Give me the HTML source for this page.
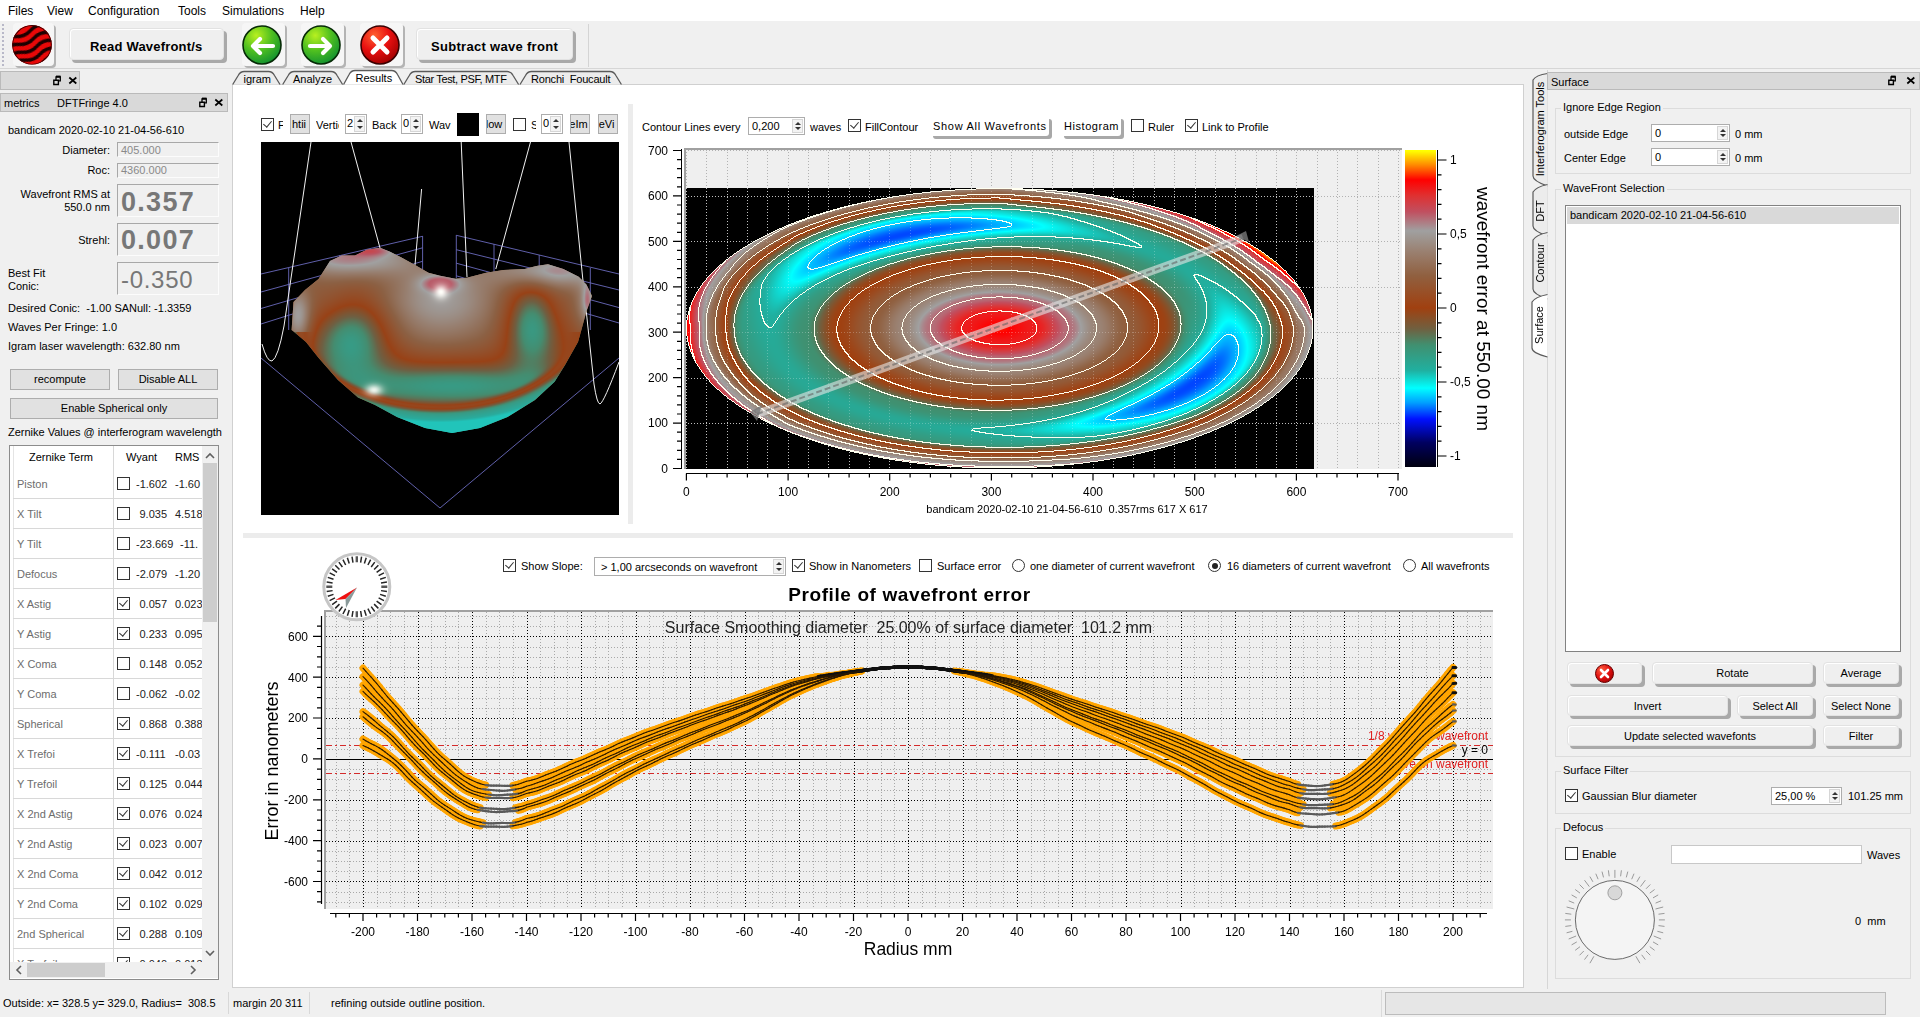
<!DOCTYPE html>
<html><head><meta charset="utf-8">
<style>
*{box-sizing:border-box}
html,body{margin:0;padding:0}
body{width:1920px;height:1017px;overflow:hidden;background:#f0f0f0;position:relative;font-family:"Liberation Sans",sans-serif;font-size:11px;color:#000}
.a{position:absolute}
.t{position:absolute;white-space:nowrap;line-height:1}
.menu{left:0;top:0;width:1920px;height:21px;background:#fff}
.menu span{position:absolute;top:4px;font-size:12px}
.tbtn{position:absolute;background:#efefef;border-radius:4px;box-shadow:inset 1px 1px 0 #fff, 3px 3px 0 #a9a9a9;border:1px solid #e2e2e2}
.btxt{font-weight:bold;font-size:13px;position:absolute;white-space:nowrap;line-height:1}
.dtitle{position:absolute;background:#d9d9d9;border:1px solid #bababa}
.pbtn{position:absolute;background:#e1e1e1;border:1px solid #adadad;text-align:center;font-size:11px;line-height:19px}
.fld{position:absolute;background:#f0f0f0;border:1px solid #fcfcfc;border-top-color:#a8a8a8;border-left-color:#a8a8a8}
.cb{position:absolute;width:13px;height:13px;border:1px solid #333;background:#fff}
.cb.on::after{content:"";position:absolute;left:3px;top:0px;width:4px;height:7px;border:solid #333;border-width:0 1.5px 1.5px 0;transform:rotate(40deg)}
.spin{position:absolute;background:#fff;border:1px solid #adadad;overflow:hidden}
.spin span{position:absolute;left:1px;top:3px;line-height:1;white-space:nowrap}
.spin i{position:absolute;right:1px;top:1px;bottom:1px;width:11px;background:#f3f3f3;border:1px solid #d6d6d6}
.spin i::before{content:"";position:absolute;left:2px;top:2px;border:3px solid transparent;border-top:0;border-bottom:3px solid #333}
.spin i::after{content:"";position:absolute;left:2px;bottom:2px;border:3px solid transparent;border-bottom:0;border-top:3px solid #333}
.sbtn{position:absolute;background:#fff;border-radius:3px;box-shadow:3px 3px 0 #a8a8a8}
.rb{position:absolute;width:13px;height:13px;border:1px solid #333;border-radius:50%;background:#fff}
.rb.on::after{content:"";position:absolute;left:2.5px;top:2.5px;width:6px;height:6px;border-radius:50%;background:#222}
.grp{position:absolute;border:1px solid #dcdcdc}
.ibtn{position:absolute;background:#f6f6f6;border-radius:4px;box-shadow:2px 2px 0 #b4b4b4}
</style></head>
<body>
<!-- MENU -->
<div class="a menu">
<span style="left:8px">Files</span>
<span style="left:47px">View</span>
<span style="left:88px">Configuration</span>
<span style="left:178px">Tools</span>
<span style="left:222px">Simulations</span>
<span style="left:300px">Help</span>
</div>
<!-- TOOLBAR -->
<div class="a" style="left:0;top:21px;width:1920px;height:48px;background:#f0f0f0;border-bottom:1px solid #d6d6d6"></div>
<div class="a" style="left:2px;top:24px;width:2px;height:42px;background:repeating-linear-gradient(#b8b8c8 0 2px,transparent 2px 4px)"></div>
<div class="ibtn" style="left:13px;top:23px;width:41px;height:43px"></div>
<div class="ibtn" style="left:242px;top:23px;width:43px;height:43px"></div>
<div class="ibtn" style="left:301px;top:23px;width:43px;height:43px"></div>
<div class="ibtn" style="left:360px;top:23px;width:43px;height:43px"></div>
<div class="tbtn" style="left:69px;top:28px;width:155px;height:32px"></div>
<div class="btxt" style="left:90px;top:40px;letter-spacing:0.2px">Read Wavefront/s</div>
<div class="tbtn" style="left:416px;top:28px;width:157px;height:32px"></div>
<div class="btxt" style="left:431px;top:40px;letter-spacing:0.3px">Subtract wave front</div>
<div class="a" style="left:588px;top:24px;width:1px;height:43px;background:#d4d4d4"></div>
<svg class="a" style="left:0;top:21px" width="420" height="48" viewBox="0 21 420 48">
<defs>
<radialGradient id="gg" cx="0.35" cy="0.25" r="0.8"><stop offset="0" stop-color="#b8f020"/><stop offset="0.5" stop-color="#50c020"/><stop offset="1" stop-color="#109030"/></radialGradient>
<radialGradient id="rg" cx="0.35" cy="0.25" r="0.8"><stop offset="0" stop-color="#ff6030"/><stop offset="0.5" stop-color="#e81010"/><stop offset="1" stop-color="#a00000"/></radialGradient>
<clipPath id="fc"><circle cx="32" cy="44.8" r="19.8"/></clipPath>
<filter id="fb" x="-20%" y="-20%" width="140%" height="140%"><feGaussianBlur stdDeviation="0.7"/></filter>
</defs>
<g clip-path="url(#fc)">
<rect x="10" y="24" width="44" height="44" fill="#e80808"/>
<g transform="rotate(-22 32 45)" stroke="#1a0000" stroke-width="3.6" fill="none" filter="url(#fb)">
<path d="M4 31 Q12 27 20 31 T36 31 T52 31 T68 31"/>
<path d="M4 39.5 Q12 35.5 20 39.5 T36 39.5 T52 39.5 T68 39.5"/>
<path d="M4 48 Q12 44 20 48 T36 48 T52 48 T68 48"/>
<path d="M4 56.5 Q12 52.5 20 56.5 T36 56.5 T52 56.5 T68 56.5"/>
<path d="M4 65 Q12 61 20 65 T36 65 T52 65 T68 65"/>
</g>
<circle cx="32" cy="45" r="19.5" fill="none" stroke="#400000" stroke-width="1.2"/>
</g>

<circle cx="262" cy="45" r="19" fill="url(#gg)" stroke="#062a06" stroke-width="1.6"/>
<path d="M273 46 H254 M260 39 L253 46 L260 53" stroke="#fff" stroke-width="4.2" stroke-linecap="round" stroke-linejoin="round" fill="none"/>
<circle cx="321" cy="45" r="19" fill="url(#gg)" stroke="#062a06" stroke-width="1.6"/>
<path d="M310 46 H329 M323 39 L330 46 L323 53" stroke="#fff" stroke-width="4.2" stroke-linecap="round" stroke-linejoin="round" fill="none"/>
<circle cx="380" cy="45" r="19" fill="url(#rg)" stroke="#3a0000" stroke-width="1.6"/>
<path d="M373 38 L387 52 M387 38 L373 52" stroke="#fff" stroke-width="5" stroke-linecap="round" fill="none"/>
</svg>


<!-- LEFT DOCK -->
<div class="dtitle" style="left:0;top:71px;width:80px;height:19px"></div>
<svg class="a" style="left:50px;top:75px" width="30" height="12" viewBox="0 0 30 12">
<path d="M3.8 5.2h4.6v4.3h-4.6z" fill="none" stroke="#000" stroke-width="1.4"/><path d="M6 5V1.8h4.3v4h-1.8" fill="none" stroke="#000" stroke-width="1.3"/><path d="M6 1.6h4.6" stroke="#000" stroke-width="2"/>
<path d="M19.3 2.5l7 6M26.3 2.5l-7 6" stroke="#000" stroke-width="1.7"/>
</svg>
<div class="dtitle" style="left:0;top:93px;width:228px;height:19px"></div>
<div class="t" style="left:4px;top:98px">metrics</div>
<div class="t" style="left:57px;top:98px">DFTFringe 4.0</div>
<svg class="a" style="left:196px;top:97px" width="30" height="12" viewBox="0 0 30 12">
<path d="M3.8 5.2h4.6v4.3h-4.6z" fill="none" stroke="#000" stroke-width="1.4"/><path d="M6 5V1.8h4.3v4h-1.8" fill="none" stroke="#000" stroke-width="1.3"/><path d="M6 1.6h4.6" stroke="#000" stroke-width="2"/>
<path d="M19.3 2.5l7 6M26.3 2.5l-7 6" stroke="#000" stroke-width="1.7"/>
</svg>
<div class="t" style="left:8px;top:125px">bandicam 2020-02-10 21-04-56-610</div>
<div class="t" style="left:0;top:145px;width:110px;text-align:right">Diameter:</div>
<div class="fld" style="left:117px;top:142px;width:102px;height:15px"></div>
<div class="t" style="left:121px;top:145px;color:#8a8a8a">405.000</div>
<div class="t" style="left:0;top:165px;width:110px;text-align:right">Roc:</div>
<div class="fld" style="left:117px;top:163px;width:102px;height:15px"></div>
<div class="t" style="left:121px;top:165px;color:#8a8a8a">4360.000</div>
<div class="t" style="left:0;top:189px;width:110px;text-align:right">Wavefront RMS at</div>
<div class="t" style="left:0;top:202px;width:110px;text-align:right">550.0 nm</div>
<div class="fld" style="left:117px;top:184px;width:102px;height:33px"></div>
<div class="t" style="left:121px;top:189px;font-size:27px;font-weight:bold;color:#777;letter-spacing:1.3px">0.357</div>
<div class="t" style="left:0;top:235px;width:110px;text-align:right">Strehl:</div>
<div class="fld" style="left:117px;top:223px;width:102px;height:33px"></div>
<div class="t" style="left:121px;top:227px;font-size:27px;font-weight:bold;color:#777;letter-spacing:1.3px">0.007</div>
<div class="t" style="left:8px;top:268px">Best Fit</div>
<div class="t" style="left:8px;top:281px">Conic:</div>
<div class="fld" style="left:117px;top:262px;width:102px;height:33px"></div>
<div class="t" style="left:121px;top:268px;font-size:24px;color:#777;letter-spacing:0.7px">-0.350</div>
<div class="t" style="left:8px;top:303px">Desired Conic:&nbsp; -1.00 SANull: -1.3359</div>
<div class="t" style="left:8px;top:322px">Waves Per Fringe: 1.0</div>
<div class="t" style="left:8px;top:341px">Igram laser wavelength: 632.80 nm</div>
<div class="pbtn" style="left:10px;top:369px;width:100px;height:21px">recompute</div>
<div class="pbtn" style="left:118px;top:369px;width:100px;height:21px">Disable ALL</div>
<div class="pbtn" style="left:10px;top:398px;width:208px;height:21px">Enable Spherical only</div>
<div class="t" style="left:8px;top:427px">Zernike Values @ interferogram wavelength</div>
<div class="a" style="left:9px;top:445px;width:210px;height:535px;background:#fff;border:1px solid #8c8c8c"></div>
<div class="a" style="left:10px;top:446px;width:192px;height:516px;overflow:hidden">
<div class="a" style="left:3px;top:0;width:1px;height:516px;background:#e4e4e4"></div>
<div class="a" style="left:103px;top:0;width:1px;height:516px;background:#d8d8d8"></div>
<div class="t" style="left:19px;top:6px">Zernike Term</div>
<div class="t" style="left:116px;top:6px">Wyant</div>
<div class="t" style="left:165px;top:6px">RMS</div>
<div class="t" style="left:7px;top:33px;color:#6d6d6d">Piston</div>
<div class="cb" style="left:107px;top:31px"></div>
<div class="t" style="left:126px;top:33px;color:#222">-1.602</div>
<div class="t" style="left:165px;top:33px;color:#222">-1.60</div>
<div class="a" style="left:3px;top:52px;width:189px;height:1px;background:#d8d8d8"></div>
<div class="t" style="left:7px;top:63px;color:#6d6d6d">X Tilt</div>
<div class="cb" style="left:107px;top:61px"></div>
<div class="t" style="left:129.5px;top:63px;color:#222">9.035</div>
<div class="t" style="left:165px;top:63px;color:#222">4.518</div>
<div class="a" style="left:3px;top:82px;width:189px;height:1px;background:#d8d8d8"></div>
<div class="t" style="left:7px;top:93px;color:#6d6d6d">Y Tilt</div>
<div class="cb" style="left:107px;top:91px"></div>
<div class="t" style="left:126px;top:93px;color:#222">-23.669</div>
<div class="t" style="left:170px;top:93px;color:#222">-11.</div>
<div class="a" style="left:3px;top:112px;width:189px;height:1px;background:#d8d8d8"></div>
<div class="t" style="left:7px;top:123px;color:#6d6d6d">Defocus</div>
<div class="cb" style="left:107px;top:121px"></div>
<div class="t" style="left:126px;top:123px;color:#222">-2.079</div>
<div class="t" style="left:165px;top:123px;color:#222">-1.20</div>
<div class="a" style="left:3px;top:142px;width:189px;height:1px;background:#d8d8d8"></div>
<div class="t" style="left:7px;top:153px;color:#6d6d6d">X Astig</div>
<div class="cb on" style="left:107px;top:151px"></div>
<div class="t" style="left:129.5px;top:153px;color:#222">0.057</div>
<div class="t" style="left:165px;top:153px;color:#222">0.023</div>
<div class="a" style="left:3px;top:172px;width:189px;height:1px;background:#d8d8d8"></div>
<div class="t" style="left:7px;top:183px;color:#6d6d6d">Y Astig</div>
<div class="cb on" style="left:107px;top:181px"></div>
<div class="t" style="left:129.5px;top:183px;color:#222">0.233</div>
<div class="t" style="left:165px;top:183px;color:#222">0.095</div>
<div class="a" style="left:3px;top:202px;width:189px;height:1px;background:#d8d8d8"></div>
<div class="t" style="left:7px;top:213px;color:#6d6d6d">X Coma</div>
<div class="cb" style="left:107px;top:211px"></div>
<div class="t" style="left:129.5px;top:213px;color:#222">0.148</div>
<div class="t" style="left:165px;top:213px;color:#222">0.052</div>
<div class="a" style="left:3px;top:232px;width:189px;height:1px;background:#d8d8d8"></div>
<div class="t" style="left:7px;top:243px;color:#6d6d6d">Y Coma</div>
<div class="cb" style="left:107px;top:241px"></div>
<div class="t" style="left:126px;top:243px;color:#222">-0.062</div>
<div class="t" style="left:165px;top:243px;color:#222">-0.02</div>
<div class="a" style="left:3px;top:262px;width:189px;height:1px;background:#d8d8d8"></div>
<div class="t" style="left:7px;top:273px;color:#6d6d6d">Spherical</div>
<div class="cb on" style="left:107px;top:271px"></div>
<div class="t" style="left:129.5px;top:273px;color:#222">0.868</div>
<div class="t" style="left:165px;top:273px;color:#222">0.388</div>
<div class="a" style="left:3px;top:292px;width:189px;height:1px;background:#d8d8d8"></div>
<div class="t" style="left:7px;top:303px;color:#6d6d6d">X Trefoi</div>
<div class="cb on" style="left:107px;top:301px"></div>
<div class="t" style="left:126px;top:303px;color:#222">-0.111</div>
<div class="t" style="left:165px;top:303px;color:#222">-0.03</div>
<div class="a" style="left:3px;top:322px;width:189px;height:1px;background:#d8d8d8"></div>
<div class="t" style="left:7px;top:333px;color:#6d6d6d">Y Trefoil</div>
<div class="cb on" style="left:107px;top:331px"></div>
<div class="t" style="left:129.5px;top:333px;color:#222">0.125</div>
<div class="t" style="left:165px;top:333px;color:#222">0.044</div>
<div class="a" style="left:3px;top:352px;width:189px;height:1px;background:#d8d8d8"></div>
<div class="t" style="left:7px;top:363px;color:#6d6d6d">X 2nd Astig</div>
<div class="cb on" style="left:107px;top:361px"></div>
<div class="t" style="left:129.5px;top:363px;color:#222">0.076</div>
<div class="t" style="left:165px;top:363px;color:#222">0.024</div>
<div class="a" style="left:3px;top:382px;width:189px;height:1px;background:#d8d8d8"></div>
<div class="t" style="left:7px;top:393px;color:#6d6d6d">Y 2nd Astig</div>
<div class="cb on" style="left:107px;top:391px"></div>
<div class="t" style="left:129.5px;top:393px;color:#222">0.023</div>
<div class="t" style="left:165px;top:393px;color:#222">0.007</div>
<div class="a" style="left:3px;top:412px;width:189px;height:1px;background:#d8d8d8"></div>
<div class="t" style="left:7px;top:423px;color:#6d6d6d">X 2nd Coma</div>
<div class="cb on" style="left:107px;top:421px"></div>
<div class="t" style="left:129.5px;top:423px;color:#222">0.042</div>
<div class="t" style="left:165px;top:423px;color:#222">0.012</div>
<div class="a" style="left:3px;top:442px;width:189px;height:1px;background:#d8d8d8"></div>
<div class="t" style="left:7px;top:453px;color:#6d6d6d">Y 2nd Coma</div>
<div class="cb on" style="left:107px;top:451px"></div>
<div class="t" style="left:129.5px;top:453px;color:#222">0.102</div>
<div class="t" style="left:165px;top:453px;color:#222">0.029</div>
<div class="a" style="left:3px;top:472px;width:189px;height:1px;background:#d8d8d8"></div>
<div class="t" style="left:7px;top:483px;color:#6d6d6d">2nd Spherical</div>
<div class="cb on" style="left:107px;top:481px"></div>
<div class="t" style="left:129.5px;top:483px;color:#222">0.288</div>
<div class="t" style="left:165px;top:483px;color:#222">0.109</div>
<div class="a" style="left:3px;top:502px;width:189px;height:1px;background:#d8d8d8"></div>
<div class="t" style="left:7px;top:513px;color:#6d6d6d">X Trefoil</div>
<div class="cb on" style="left:107px;top:511px"></div>
<div class="t" style="left:129.5px;top:513px;color:#222">0.040</div>
<div class="t" style="left:165px;top:513px;color:#222">0.013</div>
<div class="a" style="left:3px;top:532px;width:189px;height:1px;background:#d8d8d8"></div>
</div>
<!-- v scrollbar -->
<div class="a" style="left:202px;top:446px;width:16px;height:516px;background:#f0f0f0"></div>
<div class="a" style="left:203px;top:463px;width:14px;height:159px;background:#cdcdcd"></div>
<svg class="a" style="left:202px;top:446px" width="16" height="516" viewBox="0 0 16 516">
<path d="M4 12l4-4 4 4" fill="none" stroke="#606060" stroke-width="1.6"/>
<path d="M4 505l4 4 4-4" fill="none" stroke="#606060" stroke-width="1.6"/>
</svg>
<!-- h scrollbar -->
<div class="a" style="left:10px;top:962px;width:192px;height:16px;background:#f0f0f0"></div>
<div class="a" style="left:27px;top:963px;width:78px;height:14px;background:#cdcdcd"></div>
<svg class="a" style="left:10px;top:962px" width="192" height="16" viewBox="0 0 192 16">
<path d="M11 4l-4 4 4 4" fill="none" stroke="#606060" stroke-width="1.6"/>
<path d="M181 4l4 4-4 4" fill="none" stroke="#606060" stroke-width="1.6"/>
</svg>
<div class="a" style="left:202px;top:962px;width:16px;height:16px;background:#f0f0f0"></div>

<!-- TAB PANEL -->
<div class="a" style="left:232px;top:84px;width:1292px;height:904px;background:#fff;border:1px solid #d0d0d0"></div>
<svg class="a" style="left:228px;top:66px" width="400" height="22" viewBox="228 66 400 22"><path d="M232.7,84.5 L238.2,75.5 Q240.2,71.5 244.2,71.5 L268.5,71.5 Q272.5,71.5 274.5,75.5 L280,84.5" fill="#ececec" stroke="#5a5a5a" stroke-width="1.3"/><path d="M282.7,84.5 L288.2,75.5 Q290.2,71.5 294.2,71.5 L331.1,71.5 Q335.1,71.5 337.1,75.5 L342.6,84.5" fill="#ececec" stroke="#5a5a5a" stroke-width="1.3"/><path d="M343.6,84.5 L349.1,74.5 Q351.1,70.5 355.1,70.5 L391.5,70.5 Q395.5,70.5 397.5,74.5 L403,84.5" fill="#ffffff" stroke="#5a5a5a" stroke-width="1.3"/><path d="M403.8,84.5 L409.3,75.5 Q411.3,71.5 415.3,71.5 L507.1,71.5 Q511.1,71.5 513.1,75.5 L518.6,84.5" fill="#ececec" stroke="#5a5a5a" stroke-width="1.3"/><path d="M520,84.5 L525.5,75.5 Q527.5,71.5 531.5,71.5 L609.9,71.5 Q613.9,71.5 615.9,75.5 L621.4,84.5" fill="#ececec" stroke="#5a5a5a" stroke-width="1.3"/></svg>
<div class="t" style="left:243.5px;top:74px">igram</div>
<div class="t" style="left:293px;top:74px">Analyze</div>
<div class="t" style="left:355.5px;top:73px">Results</div>
<div class="t" style="left:415px;top:74px;letter-spacing:-0.35px">Star Test, PSF, MTF</div>
<div class="t" style="left:531px;top:74px;letter-spacing:-0.2px">Ronchi&nbsp; Foucault</div>
<!-- 3D controls -->
<div class="cb on" style="left:261px;top:118px"></div>
<div class="t" style="left:278px;top:120px;width:5px;overflow:hidden">F</div>
<div class="pbtn" style="left:290px;top:114px;width:20px;height:20px;overflow:hidden;line-height:18px;text-indent:-2px">htii</div>
<div class="t" style="left:316px;top:120px;width:23px;overflow:hidden">Vertical</div>
<div class="spin" style="left:345px;top:114px;width:22px;height:20px"><span>2</span><i></i></div>
<div class="t" style="left:372px;top:120px">Back</div>
<div class="spin" style="left:401px;top:114px;width:22px;height:20px"><span>0</span><i></i></div>
<div class="t" style="left:429px;top:120px">Wav</div>
<div class="a" style="left:457px;top:113px;width:22px;height:23px;background:#000"></div>
<div class="pbtn" style="left:486px;top:114px;width:20px;height:20px;overflow:hidden;line-height:18px;text-indent:-4px">low</div>
<div class="cb" style="left:513px;top:118px"></div>
<div class="t" style="left:531px;top:120px;width:5px;overflow:hidden">S</div>
<div class="spin" style="left:541px;top:114px;width:22px;height:20px"><span>0</span><i></i></div>
<div class="pbtn" style="left:570px;top:114px;width:20px;height:20px;overflow:hidden;line-height:18px;text-indent:-3px">eIm</div>
<div class="pbtn" style="left:598px;top:114px;width:20px;height:20px;overflow:hidden;line-height:18px;text-indent:-3px">eVi</div>
<!-- splitter between 3D and contour -->
<div class="a" style="left:628px;top:104px;width:5px;height:420px;background:#ececec"></div>
<!-- contour controls -->
<div class="t" style="left:642px;top:122px">Contour Lines every</div>
<div class="spin" style="left:748px;top:117px;width:57px;height:18px"><span style="left:3px">0,200</span><i></i></div>
<div class="t" style="left:810px;top:122px">waves</div>
<div class="cb on" style="left:848px;top:119px"></div>
<div class="t" style="left:865px;top:122px">FillContour</div>
<div class="sbtn" style="left:930px;top:116px;width:119px;height:20px"></div>
<div class="t" style="left:933px;top:121px;letter-spacing:0.7px">Show All Wavefronts</div>
<div class="sbtn" style="left:1061px;top:116px;width:60px;height:20px"></div>
<div class="t" style="left:1064px;top:121px;letter-spacing:0.55px">Histogram</div>
<div class="cb" style="left:1131px;top:119px"></div>
<div class="t" style="left:1148px;top:122px">Ruler</div>
<div class="cb on" style="left:1185px;top:119px"></div>
<div class="t" style="left:1202px;top:122px">Link to Profile</div>

<!-- 3D view -->
<svg class="a" style="left:261px;top:142px" width="358" height="373" viewBox="261 142 358 373">
<defs>
<clipPath id="sil"><path d="M291.6,330 L293.5,302 L305,290 L318.6,279 L330,261 L341.7,255.5 L355,255.5 L366.8,249.8 L380,247.8 L390,251.7 L401.4,257.5 L415,265 L428.4,272.8 L440,275.7 L455.4,278.7 L467,277.7 L486.2,272.8 L503.6,270 L524.8,269 L536.3,266 L548,264.2 L563.3,269 L578.7,276.7 L586.4,284.4 L592,296 L586.4,311.4 L580,335 L578,342 L565,365 L554.6,381.7 L535,400 L507.5,417 L480,428 L452,433 L425,428 L397,417 L375,405 L358,397.5 L338,380 L318.7,358 L306,342 L293,331Z"/></clipPath>
<filter id="b2" x="-50%" y="-50%" width="200%" height="200%"><feGaussianBlur stdDeviation="2"/></filter>
<filter id="b4" x="-50%" y="-50%" width="200%" height="200%"><feGaussianBlur stdDeviation="4"/></filter>
<filter id="b7" x="-50%" y="-50%" width="200%" height="200%"><feGaussianBlur stdDeviation="7"/></filter>
<filter id="b10" x="-50%" y="-50%" width="200%" height="200%"><feGaussianBlur stdDeviation="10"/></filter>
<radialGradient id="cone" cx="0.5" cy="0.2" r="0.8"><stop offset="0" stop-color="#d8c8c0"/><stop offset="0.35" stop-color="#b09888"/><stop offset="0.7" stop-color="#a86838"/><stop offset="1" stop-color="#a04a18"/></radialGradient>
</defs>
<rect x="261" y="142" width="358" height="373" fill="#000"/>
<g stroke="#6a6abc" stroke-width="0.9" fill="none">
<path d="M261 274L422.6 236.3M261 292L422.6 247.8M261 308.5L422.6 261.3M261 324L422.6 273"/>
<path d="M456.3 235.3L619 274M456.3 249.7L619 290M456.3 263.2L619 307.6M456.3 275.8L619 323"/>
<path d="M422.6 236V275M339.8 255V300M288.7 268V330M456.3 235V278M494 244V290M539.2 255V300M590.3 268V330"/>
<path d="M261 358L440 508L619 358"/>
</g>
<g stroke="#f2f2f2" stroke-width="1" fill="none">
<path d="M262,344 Q267,362 272,361 Q278,358 284,326 L311,142"/>
<path d="M351,142 L380,248"/>
<path d="M421.6,189 L415,265"/>
<path d="M461.2,142 L467,277"/>
<path d="M530.5,142 L495.8,269"/>
<path d="M569,142 L582.6,277 L594,384 Q597,404 600,404 Q604,402 619,362"/>
</g>
<defs><linearGradient id="fb3" x1="0" y1="0" x2="0" y2="1"><stop offset="0" stop-color="#b0a098"/><stop offset="0.35" stop-color="#a05020"/><stop offset="0.7" stop-color="#40a890"/><stop offset="0.82" stop-color="#a04a1a"/><stop offset="1" stop-color="#30c0b0"/></linearGradient></defs>
<path d="M291.6,330 L293.5,302 L305,290 L318.6,279 L330,261 L341.7,255.5 L355,255.5 L366.8,249.8 L380,247.8 L390,251.7 L401.4,257.5 L415,265 L428.4,272.8 L440,275.7 L455.4,278.7 L467,277.7 L486.2,272.8 L503.6,270 L524.8,269 L536.3,266 L548,264.2 L563.3,269 L578.7,276.7 L586.4,284.4 L592,296 L586.4,311.4 L580,335 L578,342 L565,365 L554.6,381.7 L535,400 L507.5,417 L480,428 L452,433 L425,428 L397,417 L375,405 L358,397.5 L338,380 L318.7,358 L306,342 L293,331Z" fill="url(#fb3)"/>
</svg>
<!-- contour plot canvas -->
<svg class="a" style="left:684px;top:148px" width="718" height="321" viewBox="684 148 718 321">
<defs><radialGradient id="fbc" cx="0.5" cy="0.5" r="0.5"><stop offset="0" stop-color="#ff1010"/><stop offset="0.15" stop-color="#d06070"/><stop offset="0.25" stop-color="#a0a0a0"/><stop offset="0.5" stop-color="#a04010"/><stop offset="0.62" stop-color="#40a080"/><stop offset="0.75" stop-color="#30c0b0"/><stop offset="0.86" stop-color="#50907a"/><stop offset="0.9" stop-color="#a04a18"/><stop offset="1" stop-color="#b09a90"/></radialGradient></defs>
<rect x="684" y="148" width="718" height="321" fill="#efefef"/>
<rect x="686" y="188" width="628" height="281" fill="#000"/>
<ellipse cx="999.7" cy="328.3" rx="313.7" ry="140.2" fill="url(#fbc)"/>
</svg>
<canvas id="cmap" class="a" style="left:684px;top:148px" width="718" height="321"></canvas>
<script>
(function(){
var cv=document.getElementById('cmap'),ctx=cv.getContext('2d');window.WF=function(u,v){return F(u,v);};
var W=718,H=321,OX=684,OY=148;
var img=ctx.createImageData(W,H),d=img.data;
var stops=[[-1.07,0,0,16],[-0.91,0,0,96],[-0.75,0,16,255],[-0.64,0,160,255],[-0.54,0,255,255],[-0.42,32,176,160],[-0.25,64,144,112],[-0.14,112,96,64],[0.0,160,64,16],[0.22,144,96,64],[0.38,154,128,112],[0.52,160,160,160],[0.65,192,80,96],[0.76,224,48,48],[0.865,255,0,0],[0.97,255,144,0],[1.06,255,255,0]];
function cmap(v){
 if(v<=stops[0][0])return stops[0];
 for(var i=1;i<stops.length;i++){if(v<=stops[i][0]){var a=stops[i-1],b=stops[i],t=(v-a[0])/(b[0]-a[0]);return [0,a[1]+(b[1]-a[1])*t,a[2]+(b[2]-a[2])*t,a[3]+(b[3]-a[3])*t];}}
 return stops[stops.length-1];
}
var RP=[[0,0.88],[0.12,0.8],[0.22,0.6],[0.31,0.4],[0.41,0.2],[0.52,0.0],[0.62,-0.25],[0.73,-0.38],[0.83,-0.3],[0.88,-0.12],[0.92,0.03],[0.96,0.24],[1.0,0.4],[1.05,0.45]];
function R(r){
 for(var i=1;i<RP.length;i++){if(r<=RP[i][0]){var a=RP[i-1],b=RP[i],t=(r-a[0])/(b[0]-a[0]);var tt=t*t*(3-2*t);return a[1]+(b[1]-a[1])*tt;}}
 return 0.5;
}
var EP=[[0,0.15],[30,0.6],[45,0.5],[90,0.0],[135,0.05],[180,0.5],[225,0.2],[270,0.25],[315,0.1],[360,0.15]];
var ET=[];for(var q=0;q<24;q++){var ang=q*15;for(var j=1;j<EP.length;j++){if(ang<=EP[j][0]){var tt=(ang-EP[j-1][0])/(EP[j][0]-EP[j-1][0]);ET.push(EP[j-1][1]+(EP[j][1]-EP[j-1][1])*tt);break;}}}
function adiff(a,b){var x=a-b;while(x>Math.PI)x-=2*Math.PI;while(x<-Math.PI)x+=2*Math.PI;return x;}
var D=Math.PI/180;
function F(u,v){
 var r=Math.sqrt(u*u+v*v),th=Math.atan2(v,u);
 var w=R(r);
 function lob(r,th,r0,t0,sr,st){var a=(r-r0)/sr,b=adiff(th,t0)/st;return Math.exp(-Math.pow((a*a+b*b)/2,1.25));}
 var g1=lob(r,th,0.75,116*D,0.105,30*D),g2=lob(r,th,0.74,-33*D,0.105,30*D);
 w-=0.33*(g1+g2);
 var e=Math.max(0,Math.min(1,(r-0.82)/0.18));
 var a=(th/D+360)%360,k=Math.floor(a/15),t=(a-k*15)/15;
 var E=ET[k%24]*(1-t)+ET[(k+1)%24]*t;
 w+=E*e;
 return w;
}
var cx=999.7-OX,cy=328.3-OY,rx=313.7,ry=140.2;
var bx0=686-OX,bx1=1314-OX,by0=188-OY,by1=469-OY;
var val=new Float32Array(W*H),inside=new Uint8Array(W*H);
for(var y=0;y<H;y++)for(var x=0;x<W;x++){
 var u=(x+0.5-cx)/rx,v=-(y+0.5-cy)/ry;
 var i=y*W+x;
 if(u*u+v*v<=1){inside[i]=1;val[i]=F(u,v);}
}
for(var y=0;y<H;y++)for(var x=0;x<W;x++){
 var i=y*W+x,p=i*4,c;
 if(inside[i]){
  c=cmap(val[i]);
  var q=Math.floor(val[i]/0.2),edge=false;
  if(x+1<W&&inside[i+1]&&Math.floor(val[i+1]/0.2)!=q)edge=true;
  if(y+1<H&&inside[i+W]&&Math.floor(val[i+W]/0.2)!=q)edge=true;
  if(!inside[i+1]||!inside[i-1]||!inside[i+W]||!inside[i-W])edge=true;
  if(edge){d[p]=255;d[p+1]=255;d[p+2]=240;}else{d[p]=c[1];d[p+1]=c[2];d[p+2]=c[3];}
 } else if(x>=bx0&&x<bx1&&y>=by0&&y<by1){d[p]=0;d[p+1]=0;d[p+2]=0;}
 else {d[p]=239;d[p+1]=239;d[p+2]=239;}
 d[p+3]=255;
}
ctx.putImageData(img,0,0);
// grid dotted
ctx.fillStyle='rgba(200,200,200,0.9)';
for(var k=0;k<=35;k++){var gx=Math.round(686+k*20*1.017-OX);for(var yy=1;yy<H;yy+=3){var ii=yy*W+gx;ctx.fillStyle=inside[ii]?'rgba(255,255,255,0.25)':((gx>=bx0&&gx<bx1&&yy>=by0)?'rgba(255,255,255,0.75)':'rgba(170,170,170,0.9)');ctx.fillRect(gx,yy,1,1);}}
for(var k=0;k<=7;k++){var gy=Math.round(468.5-k*100*0.4543-OY);for(var xx=1;xx<W;xx+=3){var ii=gy*W+xx;ctx.fillStyle=inside[ii]?'rgba(255,255,255,0.25)':((xx>=bx0&&xx<bx1&&gy>=by0)?'rgba(255,255,255,0.75)':'rgba(170,170,170,0.9)');ctx.fillRect(xx,gy,1,1);}}
// border top/left
ctx.fillStyle='#a0a0a0';ctx.fillRect(0,0,W,2);ctx.fillRect(0,0,2,H);
// ruler
ctx.save();ctx.translate(-OX,-OY);
ctx.strokeStyle='rgba(228,228,228,0.62)';ctx.lineWidth=8;ctx.lineCap='butt';
ctx.beginPath();ctx.moveTo(757,414);ctx.lineTo(1243,238);ctx.stroke();
ctx.strokeStyle='rgba(100,100,100,0.6)';ctx.lineWidth=2;ctx.setLineDash([6,3]);
ctx.beginPath();ctx.moveTo(757,414);ctx.lineTo(1243,238);ctx.stroke();
ctx.setLineDash([]);
ctx.fillStyle='rgba(120,120,120,0.8)';
ctx.beginPath();ctx.moveTo(750,412);ctx.lineTo(762,405);ctx.lineTo(757,421);ctx.fill();
ctx.beginPath();ctx.moveTo(1236,236);ctx.lineTo(1246,231);ctx.lineTo(1249,242);ctx.fill();
ctx.restore();
})();
</script>

<svg class="a" style="left:630px;top:140px" width="890" height="380" viewBox="630 140 890 380" font-family="Liberation Sans" font-size="12">
<path d="M681.5 149V469" stroke="#000" stroke-width="1"/>
<path d="M673 468.5H681.5 M677 459.4H681.5 M677 450.3H681.5 M677 441.2H681.5 M677 432.2H681.5 M673 423.1H681.5 M677 414.0H681.5 M677 404.9H681.5 M677 395.8H681.5 M677 386.7H681.5 M673 377.6H681.5 M677 368.6H681.5 M677 359.5H681.5 M677 350.4H681.5 M677 341.3H681.5 M673 332.2H681.5 M677 323.1H681.5 M677 314.0H681.5 M677 305.0H681.5 M677 295.9H681.5 M673 286.8H681.5 M677 277.7H681.5 M677 268.6H681.5 M677 259.5H681.5 M677 250.4H681.5 M673 241.4H681.5 M677 232.3H681.5 M677 223.2H681.5 M677 214.1H681.5 M677 205.0H681.5 M673 195.9H681.5 M677 186.8H681.5 M677 177.7H681.5 M677 168.7H681.5 M677 159.6H681.5 M673 150.5H681.5" stroke="#000" stroke-width="1.2"/>
<text x="668" y="472.8" text-anchor="end">0</text>
<text x="668" y="427.4" text-anchor="end">100</text>
<text x="668" y="381.9" text-anchor="end">200</text>
<text x="668" y="336.5" text-anchor="end">300</text>
<text x="668" y="291.1" text-anchor="end">400</text>
<text x="668" y="245.7" text-anchor="end">500</text>
<text x="668" y="200.2" text-anchor="end">600</text>
<text x="668" y="154.8" text-anchor="end">700</text>
<path d="M686 473.5H1399" stroke="#000" stroke-width="1"/>
<path d="M686.4 473.5V480.5 M706.7 473.5V477.5 M727.1 473.5V477.5 M747.4 473.5V477.5 M767.7 473.5V477.5 M788.1 473.5V480.5 M808.4 473.5V477.5 M828.7 473.5V477.5 M849.1 473.5V477.5 M869.4 473.5V477.5 M889.7 473.5V480.5 M910.1 473.5V477.5 M930.4 473.5V477.5 M950.7 473.5V477.5 M971.0 473.5V477.5 M991.4 473.5V480.5 M1011.7 473.5V477.5 M1032.0 473.5V477.5 M1052.4 473.5V477.5 M1072.7 473.5V477.5 M1093.0 473.5V480.5 M1113.4 473.5V477.5 M1133.7 473.5V477.5 M1154.0 473.5V477.5 M1174.4 473.5V477.5 M1194.7 473.5V480.5 M1215.0 473.5V477.5 M1235.4 473.5V477.5 M1255.7 473.5V477.5 M1276.0 473.5V477.5 M1296.4 473.5V480.5 M1316.7 473.5V477.5 M1337.0 473.5V477.5 M1357.4 473.5V477.5 M1377.7 473.5V477.5 M1398.0 473.5V480.5" stroke="#000" stroke-width="1.2"/>
<text x="686.4" y="496" text-anchor="middle">0</text>
<text x="788.1" y="496" text-anchor="middle">100</text>
<text x="889.7" y="496" text-anchor="middle">200</text>
<text x="991.4" y="496" text-anchor="middle">300</text>
<text x="1093.0" y="496" text-anchor="middle">400</text>
<text x="1194.7" y="496" text-anchor="middle">500</text>
<text x="1296.4" y="496" text-anchor="middle">600</text>
<text x="1398.0" y="496" text-anchor="middle">700</text>
<defs><linearGradient id="cbg" x1="0" y1="0" x2="0" y2="1">
<stop offset="0.003" stop-color="rgb(255,255,0)"/>
<stop offset="0.045" stop-color="rgb(255,144,0)"/>
<stop offset="0.094" stop-color="rgb(255,0,0)"/>
<stop offset="0.143" stop-color="rgb(224,48,48)"/>
<stop offset="0.195" stop-color="rgb(192,80,96)"/>
<stop offset="0.255" stop-color="rgb(160,160,160)"/>
<stop offset="0.321" stop-color="rgb(154,128,112)"/>
<stop offset="0.396" stop-color="rgb(144,96,64)"/>
<stop offset="0.498" stop-color="rgb(160,64,16)"/>
<stop offset="0.564" stop-color="rgb(112,96,64)"/>
<stop offset="0.615" stop-color="rgb(64,144,112)"/>
<stop offset="0.695" stop-color="rgb(32,176,160)"/>
<stop offset="0.751" stop-color="rgb(0,255,255)"/>
<stop offset="0.797" stop-color="rgb(0,160,255)"/>
<stop offset="0.849" stop-color="rgb(0,16,255)"/>
<stop offset="0.923" stop-color="rgb(0,0,96)"/>
<stop offset="0.998" stop-color="rgb(0,0,16)"/>
</linearGradient></defs>
<rect x="1405" y="150" width="31" height="317" fill="url(#cbg)"/>
<path d="M1437.5 150V467" stroke="#000" stroke-width="1"/>
<path d="M1437.5 456.0H1446.5 M1437.5 441.2H1441.5 M1437.5 426.4H1441.5 M1437.5 411.6H1441.5 M1437.5 396.8H1441.5 M1437.5 382.0H1446.5 M1437.5 367.2H1441.5 M1437.5 352.4H1441.5 M1437.5 337.6H1441.5 M1437.5 322.8H1441.5 M1437.5 308.0H1446.5 M1437.5 293.2H1441.5 M1437.5 278.4H1441.5 M1437.5 263.6H1441.5 M1437.5 248.8H1441.5 M1437.5 234.0H1446.5 M1437.5 219.2H1441.5 M1437.5 204.4H1441.5 M1437.5 189.6H1441.5 M1437.5 174.8H1441.5 M1437.5 160.0H1446.5" stroke="#000" stroke-width="1.2"/>
<text x="1450" y="164.3">1</text>
<text x="1450" y="238.3">0,5</text>
<text x="1450" y="312.3">0</text>
<text x="1450" y="386.3">-0,5</text>
<text x="1450" y="460.3">-1</text>
<text transform="translate(1477 309) rotate(90)" text-anchor="middle" font-size="19">wavefront error at 550.00 nm</text>
<text x="1067" y="513" text-anchor="middle" font-size="11">bandicam 2020-02-10 21-04-56-610&#160; 0.357rms 617 X 617</text>
</svg>
<!-- horizontal splitter -->
<div class="a" style="left:243px;top:533px;width:1270px;height:5px;background:#ececec"></div>
<!-- profile controls -->
<div class="cb on" style="left:503px;top:559px"></div>
<div class="t" style="left:521px;top:561px">Show Slope:</div>
<div class="spin" style="left:594px;top:557px;width:192px;height:19px"><span style="left:6px;top:4px">&gt; 1,00 arcseconds on wavefront</span><i></i></div>
<div class="cb on" style="left:792px;top:559px"></div>
<div class="t" style="left:809px;top:561px">Show in Nanometers</div>
<div class="cb" style="left:919px;top:559px"></div>
<div class="t" style="left:937px;top:561px">Surface error</div>
<div class="rb" style="left:1012px;top:559px"></div>
<div class="t" style="left:1030px;top:561px">one diameter of current wavefront</div>
<div class="rb on" style="left:1208px;top:559px"></div>
<div class="t" style="left:1227px;top:561px">16 diameters of current wavefront</div>
<div class="rb" style="left:1403px;top:559px"></div>
<div class="t" style="left:1421px;top:561px">All wavefronts</div>
<!-- profile plot canvas -->
<svg class="a" style="left:324px;top:610px" width="1169" height="299" viewBox="324 610 1169 299">
<rect x="324" y="610" width="1169" height="299" fill="#efefef"/>
<polyline points="363.0,706.6 373.9,715.8 384.8,725.2 395.7,735.8 406.6,747.4 417.5,758.9 428.4,769.7 439.3,779.9 450.2,788.7 461.1,796.5 472.0,802.2 482.9,805.2 493.8,806.2 504.7,806.2 515.6,805.2 526.5,801.8 537.4,798.7 548.3,794.8 559.2,790.2 570.1,785.4 581.0,780.6 591.9,775.5 602.8,770.1 613.7,764.6 624.6,759.1 635.5,754.0 646.4,749.2 657.3,744.6 668.2,740.1 679.1,735.7 690.0,731.3 700.9,727.1 711.8,722.9 722.7,718.8 733.6,714.7 744.5,710.3 755.4,705.5 766.3,700.4 777.2,695.2 788.1,690.4 799.0,686.2 809.9,682.6 820.8,679.4 831.7,676.6 842.6,674.2 853.5,672.1 864.4,670.3 875.3,668.9 886.2,667.8 897.1,667.2 908.0,667.0 918.9,667.2 929.8,667.8 940.7,668.9 951.6,670.3 962.5,672.1 973.4,674.2 984.3,676.6 995.2,679.4 1006.1,682.6 1017.0,686.2 1027.9,690.4 1038.8,695.2 1049.7,700.4 1060.6,705.5 1071.5,710.3 1082.4,714.7 1093.3,718.8 1104.2,722.9 1115.1,727.1 1126.0,731.3 1136.9,735.7 1147.8,740.1 1158.7,744.6 1169.6,749.2 1180.5,754.0 1191.4,759.1 1202.3,764.6 1213.2,770.1 1224.1,775.5 1235.0,780.6 1245.9,785.4 1256.8,790.2 1267.7,794.8 1278.6,798.7 1289.5,801.8 1300.4,805.2 1311.3,806.2 1322.2,806.2 1333.1,805.2 1344.0,802.2 1354.9,796.5 1365.8,788.7 1376.7,779.9 1387.6,769.7 1398.5,758.9 1409.4,747.4 1420.3,735.8 1431.2,725.2 1442.1,715.8 1453.0,706.6" fill="none" stroke="#ffa500" stroke-width="34" stroke-linejoin="round"/>
<polyline points="363.0,706.6 373.9,715.8 384.8,725.2 395.7,735.8 406.6,747.4 417.5,758.9 428.4,769.7 439.3,779.9 450.2,788.7 461.1,796.5 472.0,802.2 482.9,805.2 493.8,806.2 504.7,806.2 515.6,805.2 526.5,801.8 537.4,798.7 548.3,794.8 559.2,790.2 570.1,785.4 581.0,780.6 591.9,775.5 602.8,770.1 613.7,764.6 624.6,759.1 635.5,754.0 646.4,749.2 657.3,744.6 668.2,740.1 679.1,735.7 690.0,731.3 700.9,727.1 711.8,722.9 722.7,718.8 733.6,714.7 744.5,710.3 755.4,705.5 766.3,700.4 777.2,695.2 788.1,690.4 799.0,686.2 809.9,682.6 820.8,679.4 831.7,676.6 842.6,674.2 853.5,672.1 864.4,670.3 875.3,668.9 886.2,667.8 897.1,667.2 908.0,667.0 918.9,667.2 929.8,667.8 940.7,668.9 951.6,670.3 962.5,672.1 973.4,674.2 984.3,676.6 995.2,679.4 1006.1,682.6 1017.0,686.2 1027.9,690.4 1038.8,695.2 1049.7,700.4 1060.6,705.5 1071.5,710.3 1082.4,714.7 1093.3,718.8 1104.2,722.9 1115.1,727.1 1126.0,731.3 1136.9,735.7 1147.8,740.1 1158.7,744.6 1169.6,749.2 1180.5,754.0 1191.4,759.1 1202.3,764.6 1213.2,770.1 1224.1,775.5 1235.0,780.6 1245.9,785.4 1256.8,790.2 1267.7,794.8 1278.6,798.7 1289.5,801.8 1300.4,805.2 1311.3,806.2 1322.2,806.2 1333.1,805.2 1344.0,802.2 1354.9,796.5 1365.8,788.7 1376.7,779.9 1387.6,769.7 1398.5,758.9 1409.4,747.4 1420.3,735.8 1431.2,725.2 1442.1,715.8 1453.0,706.6" fill="none" stroke="#3a2a10" stroke-width="2"/>
<path d="M326 759.5H1493" stroke="#000"/>
</svg>
<canvas id="prof" class="a" style="left:243px;top:540px" width="1270" height="440"></canvas>
<script>
(function(){
var cv=document.getElementById('prof'),ctx=cv.getContext('2d');
var OX=243,OY=540;
ctx.translate(-OX,-OY);
var PX0=324,PX1=1493,PY0=610,PY1=909;
function X(mm){return 908+mm*2.725;}
function Y(nm){return 758.9-nm*0.2043;}
ctx.fillStyle='#efefef';ctx.fillRect(PX0,PY0,PX1-PX0,PY1-PY0);
// minor grid
function dotV(x,col,step){ctx.fillStyle=col;for(var y=PY0+2;y<PY1;y+=step)ctx.fillRect(Math.round(x),y,1,1);}
function dotH(y,col,step){ctx.fillStyle=col;for(var x=PX0+2;x<PX1;x+=step)ctx.fillRect(x,Math.round(y),1,1);}
for(var mm=-210;mm<=215;mm+=5){var x=X(mm);if(x<PX0+2||x>PX1)continue;if(mm%20!=0)dotV(x,'#a8a8a8',3);}
for(var nm=-700;nm<=700;nm+=50){var y=Y(nm);if(y<PY0+2||y>PY1)continue;if(nm%200!=0)dotH(y,'#a8a8a8',3);}
for(var mm=-200;mm<=200;mm+=20){dotV(X(mm),'#000',3);}
for(var nm=-600;nm<=600;nm+=200){dotH(Y(nm),'#000',3);}
ctx.fillStyle='#a0a0a0';ctx.fillRect(PX0,PY0,PX1-PX0,2);ctx.fillRect(PX0,PY0,2,PY1-PY0);
// 1/8 wave lines
ctx.strokeStyle='#d42a2a';ctx.lineWidth=1;ctx.setLineDash([6,3,2,3]);
[68.75,-68.75].forEach(function(v){var y=Math.round(Y(v))+0.5;ctx.beginPath();ctx.moveTo(PX0+2,y);ctx.lineTo(PX1,y);ctx.stroke();});
ctx.setLineDash([]);
ctx.strokeStyle='#000';ctx.beginPath();ctx.moveTo(PX0+2,759.5);ctx.lineTo(PX1,759.5);ctx.stroke();
// center black segment
ctx.font='12px "Liberation Sans"';ctx.textAlign='right';
ctx.fillStyle='#e02020';ctx.fillText('1/8 wave on wavefront',1488,740);
ctx.fillStyle='#000';ctx.fillText('y = 0',1488,754);
ctx.fillStyle='#e02020';ctx.fillText('1/8 wave on wavefront',1488,768);

// curves
var aL=[1.0,0.77,0.55,0.40,-0.13,-0.27,-0.83,-1.0],aR=[1.0,0.80,0.60,0.35,0.06,-0.10,-0.39,-1.0];
var ST=[[-20,425],[0,450],[20,425],[40,356],[60,238],[80,135],[100,24],[120,-106],[140,-210],[150,-232],[160,-212],[170,-125],[180,0],[190,140],[200,256],[210,370]];
var GT=[[-20,0],[0,0],[20,3],[40,27],[60,55],[80,70],[100,85],[120,100],[140,100],[150,100],[160,106],[170,122],[180,137],[190,150],[200,190],[210,230]];
function cr(T,r){for(var i=1;i<T.length-2;i++){if(r<=T[i+1][0]){var t=(r-T[i][0])/(T[i+1][0]-T[i][0]);var p0=T[i-1][1],p1=T[i][1],p2=T[i+1][1],p3=T[i+2][1];return 0.5*((2*p1)+(-p0+p2)*t+(2*p0-5*p1+4*p2-p3)*t*t+(-p0+3*p1-3*p2+p3)*t*t*t);}}return T[T.length-2][1];}
var all=[];
for(var k=0;k<8;k++){
 var pts=[];
 for(var mm=-200;mm<=201;mm+=1){
  var r=Math.abs(mm);
  var a=mm<0?aL[k]:aR[k];
  var w=cr(ST,r)+a*cr(GT,r)+1.5*Math.sin(mm*0.7+k*2)*r/200;
  pts.push([X(mm),Y(w),w]);
 }
 all.push(pts);
}
ctx.lineCap='round';ctx.lineJoin='round';
var TH=2.4;
all.forEach(function(pts){
 ctx.strokeStyle='#ffa500';ctx.lineWidth=7;
 for(var i=1;i<pts.length;i++){
  if(Math.abs(pts[i][2]-pts[i-1][2])>TH){ctx.beginPath();ctx.moveTo(pts[i-1][0],pts[i-1][1]);ctx.lineTo(pts[i][0],pts[i][1]);ctx.stroke();}
 }
});
all.forEach(function(pts){
 for(var i=1;i<pts.length;i++){
  if(Math.abs(pts[i][2]-pts[i-1][2])>TH){ctx.strokeStyle='#2a1800';ctx.lineWidth=1.1;}else if(pts[i][2]>300){ctx.strokeStyle='#101010';ctx.lineWidth=3;}else{ctx.strokeStyle='#5a5a5a';ctx.lineWidth=2.2;}
  ctx.beginPath();ctx.moveTo(pts[i-1][0],pts[i-1][1]);ctx.lineTo(pts[i][0],pts[i][1]);ctx.stroke();
 }
});
})();
</script>

<svg class="a" style="left:243px;top:540px" width="1270" height="440" viewBox="243 540 1270 440" font-family="Liberation Sans" font-size="12">
<path d="M321.5 616V904" stroke="#000" stroke-width="1.2"/>
<path d="M317 901.9H321.5 M317 891.7H321.5 M313 881.5H321.5 M317 871.3H321.5 M317 861.0H321.5 M317 850.8H321.5 M313 840.6H321.5 M317 830.4H321.5 M317 820.2H321.5 M317 810.0H321.5 M313 799.8H321.5 M317 789.5H321.5 M317 779.3H321.5 M317 769.1H321.5 M313 758.9H321.5 M317 748.7H321.5 M317 738.5H321.5 M317 728.3H321.5 M313 718.0H321.5 M317 707.8H321.5 M317 697.6H321.5 M317 687.4H321.5 M313 677.2H321.5 M317 667.0H321.5 M317 656.8H321.5 M317 646.5H321.5 M313 636.3H321.5 M317 626.1H321.5" stroke="#000" stroke-width="1.2"/>
<text x="308" y="885.8" text-anchor="end">-600</text>
<text x="308" y="844.9" text-anchor="end">-400</text>
<text x="308" y="804.1" text-anchor="end">-200</text>
<text x="308" y="763.2" text-anchor="end">0</text>
<text x="308" y="722.3" text-anchor="end">200</text>
<text x="308" y="681.5" text-anchor="end">400</text>
<text x="308" y="640.6" text-anchor="end">600</text>
<path d="M330 913.5H1487" stroke="#000" stroke-width="1.2"/>
<path d="M335.8 913.5V917.5 M349.4 913.5V917.5 M363.0 913.5V921 M376.6 913.5V917.5 M390.2 913.5V917.5 M403.9 913.5V917.5 M417.5 913.5V921 M431.1 913.5V917.5 M444.8 913.5V917.5 M458.4 913.5V917.5 M472.0 913.5V921 M485.6 913.5V917.5 M499.2 913.5V917.5 M512.9 913.5V917.5 M526.5 913.5V921 M540.1 913.5V917.5 M553.8 913.5V917.5 M567.4 913.5V917.5 M581.0 913.5V921 M594.6 913.5V917.5 M608.2 913.5V917.5 M621.9 913.5V917.5 M635.5 913.5V921 M649.1 913.5V917.5 M662.8 913.5V917.5 M676.4 913.5V917.5 M690.0 913.5V921 M703.6 913.5V917.5 M717.2 913.5V917.5 M730.9 913.5V917.5 M744.5 913.5V921 M758.1 913.5V917.5 M771.8 913.5V917.5 M785.4 913.5V917.5 M799.0 913.5V921 M812.6 913.5V917.5 M826.2 913.5V917.5 M839.9 913.5V917.5 M853.5 913.5V921 M867.1 913.5V917.5 M880.8 913.5V917.5 M894.4 913.5V917.5 M908.0 913.5V921 M921.6 913.5V917.5 M935.2 913.5V917.5 M948.9 913.5V917.5 M962.5 913.5V921 M976.1 913.5V917.5 M989.8 913.5V917.5 M1003.4 913.5V917.5 M1017.0 913.5V921 M1030.6 913.5V917.5 M1044.2 913.5V917.5 M1057.9 913.5V917.5 M1071.5 913.5V921 M1085.1 913.5V917.5 M1098.8 913.5V917.5 M1112.4 913.5V917.5 M1126.0 913.5V921 M1139.6 913.5V917.5 M1153.2 913.5V917.5 M1166.9 913.5V917.5 M1180.5 913.5V921 M1194.1 913.5V917.5 M1207.8 913.5V917.5 M1221.4 913.5V917.5 M1235.0 913.5V921 M1248.6 913.5V917.5 M1262.2 913.5V917.5 M1275.9 913.5V917.5 M1289.5 913.5V921 M1303.1 913.5V917.5 M1316.8 913.5V917.5 M1330.4 913.5V917.5 M1344.0 913.5V921 M1357.6 913.5V917.5 M1371.2 913.5V917.5 M1384.9 913.5V917.5 M1398.5 913.5V921 M1412.1 913.5V917.5 M1425.8 913.5V917.5 M1439.4 913.5V917.5 M1453.0 913.5V921 M1466.6 913.5V917.5 M1480.2 913.5V917.5" stroke="#000" stroke-width="1.2"/>
<text x="363.0" y="935.5" text-anchor="middle">-200</text>
<text x="417.5" y="935.5" text-anchor="middle">-180</text>
<text x="472.0" y="935.5" text-anchor="middle">-160</text>
<text x="526.5" y="935.5" text-anchor="middle">-140</text>
<text x="581.0" y="935.5" text-anchor="middle">-120</text>
<text x="635.5" y="935.5" text-anchor="middle">-100</text>
<text x="690.0" y="935.5" text-anchor="middle">-80</text>
<text x="744.5" y="935.5" text-anchor="middle">-60</text>
<text x="799.0" y="935.5" text-anchor="middle">-40</text>
<text x="853.5" y="935.5" text-anchor="middle">-20</text>
<text x="908.0" y="935.5" text-anchor="middle">0</text>
<text x="962.5" y="935.5" text-anchor="middle">20</text>
<text x="1017.0" y="935.5" text-anchor="middle">40</text>
<text x="1071.5" y="935.5" text-anchor="middle">60</text>
<text x="1126.0" y="935.5" text-anchor="middle">80</text>
<text x="1180.5" y="935.5" text-anchor="middle">100</text>
<text x="1235.0" y="935.5" text-anchor="middle">120</text>
<text x="1289.5" y="935.5" text-anchor="middle">140</text>
<text x="1344.0" y="935.5" text-anchor="middle">160</text>
<text x="1398.5" y="935.5" text-anchor="middle">180</text>
<text x="1453.0" y="935.5" text-anchor="middle">200</text>
<text transform="translate(278 761) rotate(-90)" text-anchor="middle" font-size="18">Error in nanometers</text>
<text x="908" y="955" text-anchor="middle" font-size="17.5">Radius mm</text>
<text x="909.5" y="601" text-anchor="middle" font-size="19" font-weight="bold" letter-spacing="0.6">Profile of wavefront error</text>
<text x="908.5" y="632.5" text-anchor="middle" font-size="16" fill="#222">Surface Smoothing diameter&#160; 25.00% of surface diameter&#160; 101.2 mm</text>
<circle cx="356.8" cy="586.8" r="33" fill="#fff" stroke="#c6c6c6" stroke-width="3"/>
<path d="M381.00 590.63L386.92 591.57 M380.10 594.37L385.81 596.23 M378.63 597.92L383.98 600.65 M376.62 601.20L381.48 604.73 M374.12 604.12L378.37 608.37 M371.20 606.62L374.73 611.48 M367.92 608.63L370.65 613.98 M364.37 610.10L366.23 615.81 M360.63 611.00L361.57 616.92 M352.97 611.00L352.03 616.92 M349.23 610.10L347.37 615.81 M345.68 608.63L342.95 613.98 M342.40 606.62L338.87 611.48 M339.48 604.12L335.23 608.37 M336.98 601.20L332.12 604.73 M334.97 597.92L329.62 600.65 M333.50 594.37L327.79 596.23 M332.60 590.63L326.68 591.57 M332.60 582.97L326.68 582.03 M333.50 579.23L327.79 577.37 M334.97 575.68L329.62 572.95 M336.98 572.40L332.12 568.87 M339.48 569.48L335.23 565.23 M342.40 566.98L338.87 562.12 M345.68 564.97L342.95 559.62 M349.23 563.50L347.37 557.79 M352.97 562.60L352.03 556.68 M360.63 562.60L361.57 556.68 M364.37 563.50L366.23 557.79 M367.92 564.97L370.65 559.62 M371.20 566.98L374.73 562.12 M374.12 569.48L378.37 565.23 M376.62 572.40L381.48 568.87 M378.63 575.68L383.98 572.95 M380.10 579.23L385.81 577.37 M381.00 582.97L386.92 582.03" stroke="#262626" stroke-width="1.5"/><path d="M381.30 586.80L387.30 586.80 M356.80 611.30L356.80 617.30 M332.30 586.80L326.30 586.80 M356.80 562.30L356.80 556.30" stroke="#555" stroke-width="2.4"/>
<path d="M357 587.5L335.5 600L345.5 599z" fill="#ee1010"/><path d="M357 587.5L345.5 599L346 608z" fill="#8a9a9a"/>
</svg>
<!-- RIGHT DOCK -->
<div class="a" style="left:1547px;top:70px;width:1px;height:919px;background:#d6d6d6"></div>
<svg class="a" style="left:1526px;top:68px" width="24" height="292" viewBox="1526 68 24 292">
<path d="M1547.5 73.5 Q1536 75 1533 80 L1533 176 Q1533 181 1547.5 186" fill="#ececec" stroke="#5a5a5a" stroke-width="1.2"/>
<path d="M1547.5 184.5 Q1536 187 1533 192 L1533 226 Q1533 231 1547.5 236" fill="#ececec" stroke="#5a5a5a" stroke-width="1.2"/>
<path d="M1547.5 232.5 Q1536 235 1533 240 L1533 289 Q1533 294 1547.5 299" fill="#ececec" stroke="#5a5a5a" stroke-width="1.2"/>
<path d="M1547.5 294.5 Q1535 297 1532 302 L1532 348 Q1532 353 1547.5 357" fill="#ffffff" stroke="#5a5a5a" stroke-width="1.2"/>
</svg>
<div class="t" style="left:1539.5px;top:129px;transform:translate(-50%,-50%) rotate(-90deg)">Interferogram Tools</div>
<div class="t" style="left:1539.5px;top:211px;transform:translate(-50%,-50%) rotate(-90deg)">DFT</div>
<div class="t" style="left:1539.5px;top:263px;transform:translate(-50%,-50%) rotate(-90deg)">Contour</div>
<div class="t" style="left:1538.5px;top:325px;transform:translate(-50%,-50%) rotate(-90deg)">Surface</div>
<div class="dtitle" style="left:1547px;top:72px;width:373px;height:18px"></div>
<div class="t" style="left:1551px;top:77px">Surface</div>
<svg class="a" style="left:1885px;top:75px" width="35" height="12" viewBox="0 0 35 12">
<path d="M3.8 5.2h4.6v4.3h-4.6z" fill="none" stroke="#000" stroke-width="1.4"/><path d="M6 5V1.8h4.3v4h-1.8" fill="none" stroke="#000" stroke-width="1.3"/><path d="M6 1.6h4.6" stroke="#000" stroke-width="2"/>
<path d="M22.3 2.5l7 6M29.3 2.5l-7 6" stroke="#000" stroke-width="1.7"/>
</svg>
<div class="grp" style="left:1555px;top:108px;width:356px;height:66px"></div>
<div class="t" style="left:1561px;top:102px;background:#f0f0f0;padding:0 2px">Ignore Edge Region</div>
<div class="t" style="left:1564px;top:129px">outside Edge</div>
<div class="spin" style="left:1651px;top:124px;width:79px;height:18px"><span style="left:3px;top:3px">0</span><i></i></div>
<div class="t" style="left:1735px;top:129px">0 mm</div>
<div class="t" style="left:1564px;top:153px">Center Edge</div>
<div class="spin" style="left:1651px;top:148px;width:79px;height:18px"><span style="left:3px;top:3px">0</span><i></i></div>
<div class="t" style="left:1735px;top:153px">0 mm</div>
<div class="grp" style="left:1555px;top:189px;width:356px;height:568px"></div>
<div class="t" style="left:1561px;top:183px;background:#f0f0f0;padding:0 2px">WaveFront Selection</div>
<div class="a" style="left:1565px;top:205px;width:336px;height:447px;background:#fff;border:1px solid #828282"></div>
<div class="a" style="left:1567px;top:207px;width:332px;height:17px;background:#d9d9d9"></div>
<div class="t" style="left:1570px;top:210px">bandicam 2020-02-10 21-04-56-610</div>
<div class="tbtn" style="left:1567px;top:662px;width:75px;height:22px"></div>
<svg class="a" style="left:1594px;top:663px" width="22" height="22" viewBox="0 0 22 22">
<defs><radialGradient id="rg2" cx="0.35" cy="0.3" r="0.8"><stop offset="0" stop-color="#ff6040"/><stop offset="0.55" stop-color="#e01010"/><stop offset="1" stop-color="#a00000"/></radialGradient></defs>
<circle cx="10.5" cy="10.5" r="9" fill="url(#rg2)" stroke="#600" stroke-width="1"/>
<path d="M7 7l7 7M14 7l-7 7" stroke="#fff" stroke-width="2.6" stroke-linecap="round"/>
</svg>
<div class="tbtn" style="left:1652px;top:662px;width:161px;height:22px"></div>
<div class="t" style="left:1652px;top:668px;width:161px;text-align:center">Rotate</div>
<div class="tbtn" style="left:1823px;top:662px;width:76px;height:22px"></div>
<div class="t" style="left:1823px;top:668px;width:76px;text-align:center">Average</div>
<div class="tbtn" style="left:1567px;top:695px;width:161px;height:21px"></div>
<div class="t" style="left:1567px;top:701px;width:161px;text-align:center">Invert</div>
<div class="tbtn" style="left:1737px;top:695px;width:76px;height:21px"></div>
<div class="t" style="left:1737px;top:701px;width:76px;text-align:center">Select All</div>
<div class="tbtn" style="left:1823px;top:695px;width:76px;height:21px"></div>
<div class="t" style="left:1823px;top:701px;width:76px;text-align:center">Select None</div>
<div class="tbtn" style="left:1567px;top:725px;width:246px;height:21px"></div>
<div class="t" style="left:1567px;top:731px;width:246px;text-align:center">Update selected wavefonts</div>
<div class="tbtn" style="left:1823px;top:725px;width:76px;height:21px"></div>
<div class="t" style="left:1823px;top:731px;width:76px;text-align:center">Filter</div>
<div class="grp" style="left:1555px;top:771px;width:356px;height:43px"></div>
<div class="t" style="left:1561px;top:765px;background:#f0f0f0;padding:0 2px">Surface Filter</div>
<div class="cb on" style="left:1565px;top:789px"></div>
<div class="t" style="left:1582px;top:791px">Gaussian Blur diameter</div>
<div class="spin" style="left:1771px;top:787px;width:71px;height:18px"><span style="left:3px;top:3px">25,00 %</span><i></i></div>
<div class="t" style="left:1848px;top:791px">101.25 mm</div>
<div class="grp" style="left:1555px;top:828px;width:356px;height:151px"></div>
<div class="t" style="left:1561px;top:822px;background:#f0f0f0;padding:0 2px">Defocus</div>
<div class="cb" style="left:1565px;top:847px"></div>
<div class="t" style="left:1582px;top:849px">Enable</div>
<div class="a" style="left:1671px;top:845px;width:191px;height:19px;background:#fff;border:1px solid #c8c8c8"></div>
<div class="t" style="left:1867px;top:850px">Waves</div>
<div class="t" style="left:1855px;top:916px">0&nbsp; mm</div>
<svg class="a" style="left:1560px;top:865px" width="110" height="110" viewBox="1560 865 110 110">
<path d="M1593.9 956.3L1589.9 963.2 M1588.1 954.8L1584.5 959.6 M1583.8 951.0L1579.5 955.3 M1580.0 946.7L1575.2 950.3 M1576.8 941.9L1571.6 944.9 M1576.1 936.0L1568.7 939.0 M1572.4 931.3L1566.6 932.8 M1571.3 925.6L1565.3 926.4 M1570.9 919.9L1564.9 919.9 M1571.3 914.2L1565.3 913.4 M1574.3 909.0L1566.6 907.0 M1574.2 903.1L1568.7 900.8 M1576.8 897.9L1571.6 894.9 M1580.0 893.1L1575.2 889.5 M1583.8 888.8L1579.5 884.5 M1589.3 886.6L1584.5 880.2 M1592.9 881.8L1589.9 876.6 M1598.1 879.2L1595.8 873.7 M1603.5 877.4L1602.0 871.6 M1609.2 876.3L1608.4 870.3 M1614.9 877.9L1614.9 869.9 M1620.6 876.3L1621.4 870.3 M1626.3 877.4L1627.8 871.6 M1631.7 879.2L1634.0 873.7 M1636.9 881.8L1639.9 876.6 M1640.5 886.6L1645.3 880.2 M1646.0 888.8L1650.3 884.5 M1649.8 893.1L1654.6 889.5 M1653.0 897.9L1658.2 894.9 M1655.6 903.1L1661.1 900.8 M1655.5 909.0L1663.2 907.0 M1658.5 914.2L1664.5 913.4 M1658.9 919.9L1664.9 919.9 M1658.5 925.6L1664.5 926.4 M1657.4 931.3L1663.2 932.8 M1653.7 936.0L1661.1 939.0 M1653.0 941.9L1658.2 944.9 M1649.8 946.7L1654.6 950.3 M1646.0 951.0L1650.3 955.3 M1641.7 954.8L1645.3 959.6 M1635.9 956.3L1639.9 963.2" stroke="#9a9a9a" stroke-width="1"/>
<circle cx="1614.9" cy="919.9" r="39.5" fill="#f4f4f4" stroke="#6a6a6a" stroke-width="1"/>
<circle cx="1614.9" cy="892.8" r="7" fill="#d8d8d8" stroke="#a0a0a0" stroke-width="1"/>
</svg>
<!-- STATUS BAR -->
<div class="t" style="left:3px;top:998px">Outside: x= 328.5 y= 329.0, Radius=&nbsp; 308.5</div>
<div class="a" style="left:228px;top:992px;width:1px;height:22px;background:#d8d8d8"></div>
<div class="t" style="left:233px;top:998px">margin 20 311</div>
<div class="a" style="left:309px;top:992px;width:1px;height:22px;background:#d8d8d8"></div>
<div class="t" style="left:331px;top:998px">refining outside outline position.</div>
<div class="a" style="left:1385px;top:992px;width:501px;height:23px;background:#e6e6e6;border:1px solid #bcbcbc"></div><div class="a" style="left:1381px;top:990px;width:1px;height:27px;background:#dadada"></div>
<canvas id="v3d" class="a" style="left:261px;top:142px" width="358" height="373"></canvas>
<script>
(function(){
var cv=document.getElementById('v3d'),ctx=cv.getContext('2d');
var OX=261,OY=142,W=358,H=373;
var stops=[[-1.07,0,0,16],[-0.91,0,0,96],[-0.75,0,16,255],[-0.64,0,160,255],[-0.54,0,255,255],[-0.42,32,176,160],[-0.25,64,144,112],[-0.14,112,96,64],[0.0,160,64,16],[0.22,144,96,64],[0.38,154,128,112],[0.52,160,160,160],[0.65,192,80,96],[0.76,224,48,48],[0.865,255,0,0],[0.97,255,144,0],[1.06,255,255,0]];
function cmap(v){if(v<=stops[0][0])return stops[0];for(var i=1;i<stops.length;i++){if(v<=stops[i][0]){var a=stops[i-1],b=stops[i],t=(v-a[0])/(b[0]-a[0]);return [0,a[1]+(b[1]-a[1])*t,a[2]+(b[2]-a[2])*t,a[3]+(b[3]-a[3])*t];}}return stops[stops.length-1];}
function G(x,y,cx,cy,sx,sy){var dx=(x-cx)/sx,dy=(y-cy)/sy;return Math.exp(-(dx*dx+dy*dy)/2);}
// offscreen render
var off=document.createElement('canvas');off.width=W;off.height=H;var oc=off.getContext('2d');
var img=oc.createImageData(W,H),d=img.data;
for(var py=0;py<H;py++)for(var px=0;px<W;px++){
 var x=px+OX+0.5,y=py+OY+0.5;
 var v=0.03;
 v+=0.5*G(x,y,350,258,50,13);
 v+=0.48*G(x,y,550,270,42,12);
 v+=0.42*G(x,y,298,318,9,20);
 v+=0.2*G(x,y,585,305,8,20);
 v+=0.2*G(x,y,330,300,30,25);
 v+=0.15*G(x,y,560,300,25,25);
 v-=0.46*G(x,y,352,336,26,30);
 v-=0.46*G(x,y,532,325,18,30);
 
 
 v-=0.36*G(x,y,452,386,85,14);
 v+=0.46*G(x,y,441,300,48,26)+0.1*G(x,y,441,338,62,16);
 var rr=Math.sqrt(Math.pow((x-440)/135,2)+Math.pow((y-330)/77,2));
 if(y>332){
  var band=Math.exp(-Math.pow((rr-1)/0.045,2));
  if(rr>1){var t=Math.min(1,(rr-1)/0.2);var bl=Math.min(1,(rr-1)/0.09);v=v*(1-bl)+(-0.22-0.24*t)*bl;}
  v=v*(1-band)+0.03*band;
 }
 v+=0.3*G(x,y,440,283,14,6);if(v>0.64)v=0.64;if(v<-0.48)v=-0.48;
 v+=0.25*G(x,y,372,250,16,4);
 v+=0.3*G(x,y,588,300,4,14);
 var c=cmap(v);
 var r=c[1],g=c[2],b=c[3];
 // soften saturation a bit
 var m=(r+g+b)/3;r=r*0.9+m*0.1;g=g*0.9+m*0.1;b=b*0.9+m*0.1;
 var s=Math.max(G(x,y,441,292,5,5),0.9*G(x,y,374,390,6,4));
 r=r+(255-r)*s;g=g+(255-g)*s;b=b+(250-b)*s;
 var p=(py*W+px)*4;d[p]=r;d[p+1]=g;d[p+2]=b;d[p+3]=255;
}
oc.putImageData(img,0,0);
ctx.save();ctx.translate(-OX,-OY);
var path=new Path2D("M291.6,330 L293.5,302 L305,290 L318.6,279 L330,261 L341.7,255.5 L355,255.5 L366.8,249.8 L380,247.8 L390,251.7 L401.4,257.5 L415,265 L428.4,272.8 L440,275.7 L455.4,278.7 L467,277.7 L486.2,272.8 L503.6,270 L524.8,269 L536.3,266 L548,264.2 L563.3,269 L578.7,276.7 L586.4,284.4 L592,296 L586.4,311.4 L580,335 L578,342 L565,365 L554.6,381.7 L535,400 L507.5,417 L480,428 L452,433 L425,428 L397,417 L375,405 L358,397.5 L338,380 L318.7,358 L306,342 L293,331Z");
ctx.clip(path);
ctx.drawImage(off,OX,OY);
ctx.restore();
})();
</script>
</body></html>
